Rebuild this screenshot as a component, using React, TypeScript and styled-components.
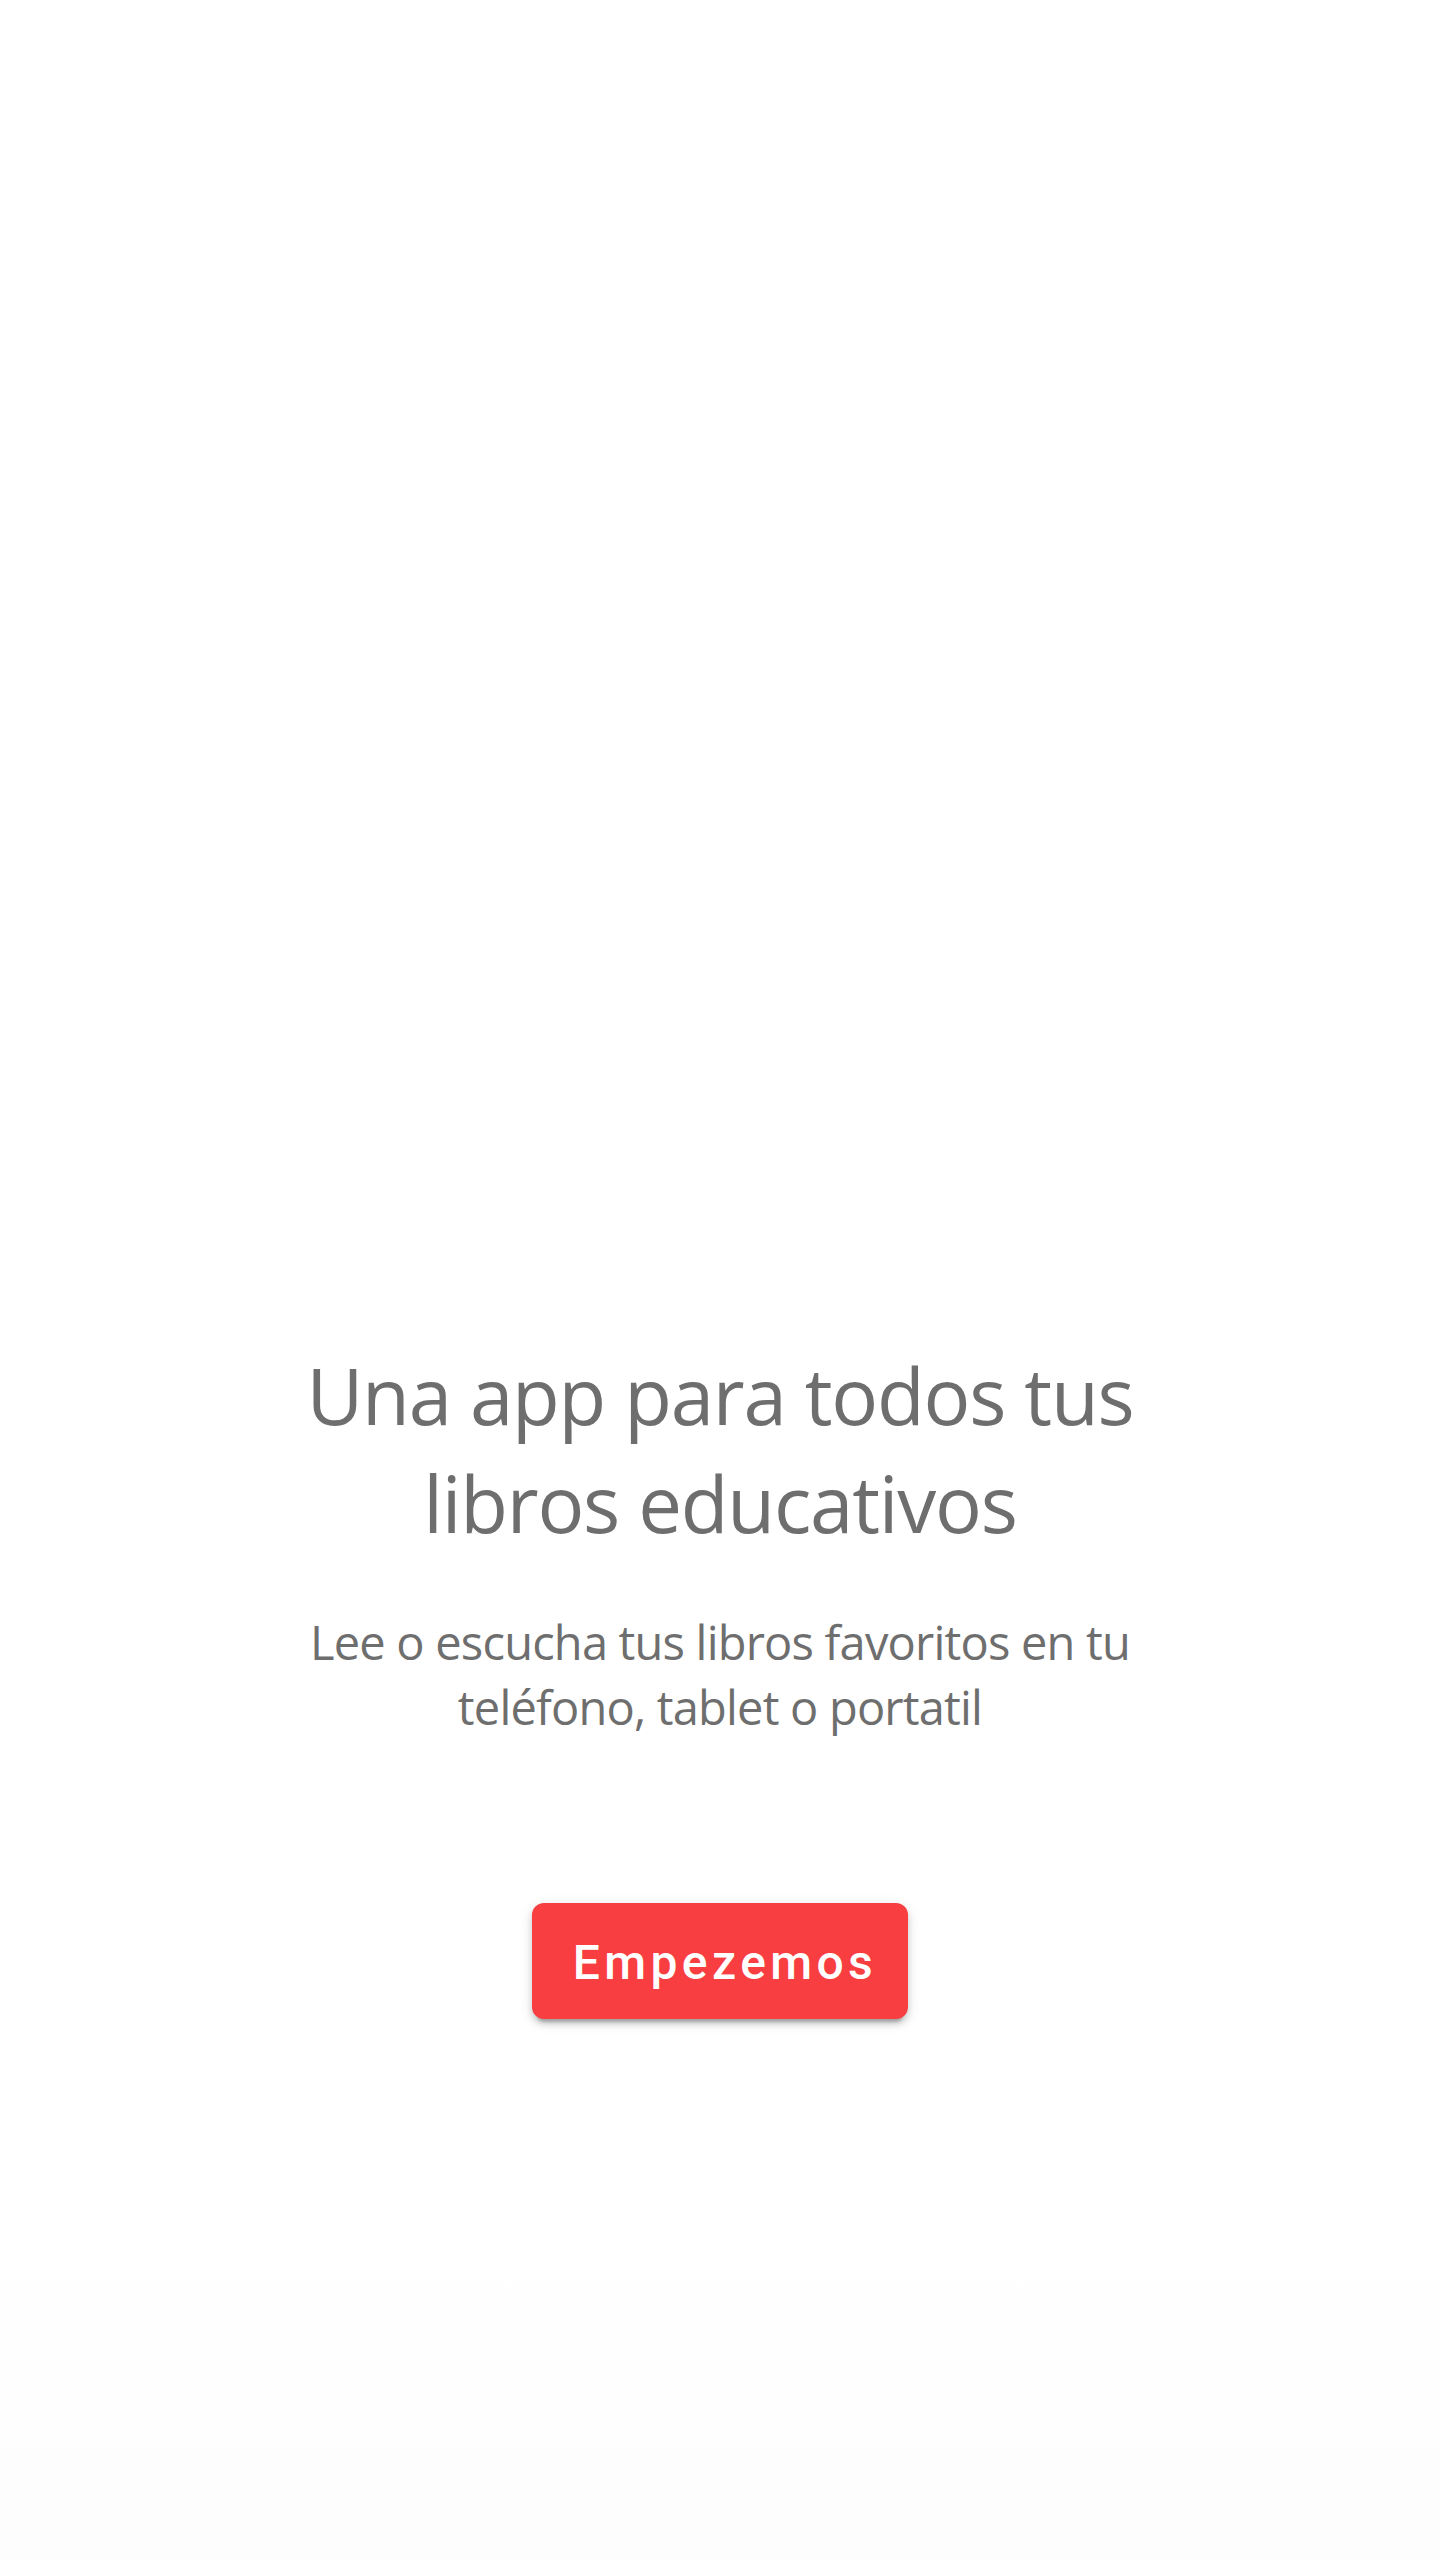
import React from "react";
import styled, { createGlobalStyle } from "styled-components";

const GlobalStyle = createGlobalStyle`
  html, body {
    margin: 0;
    padding: 0;
    background: #ffffff;
  }
  body {
    font-family: "Open Sans", "Noto Sans", "Liberation Sans", sans-serif;
  }
`;

const Page = styled.main`
  min-height: 2560px;
  box-sizing: border-box;
  display: flex;
  flex-direction: column;
  align-items: center;
  padding-top: 1341px;
  background: linear-gradient(#ffffff 0%, #ffffff 85%, #fdfdfd 100%);
`;

const Heading = styled.h1`
  margin: 0;
  font-family: "Open Sans", "Noto Sans", sans-serif;
  font-weight: 400;
  font-size: 78px;
  line-height: 108px;
  letter-spacing: -1.2px;
  color: #6e6e6e;
  text-align: center;
`;

const Subtitle = styled.p`
  margin: 53px 0 0;
  font-family: "Open Sans", "Noto Sans", sans-serif;
  font-weight: 400;
  font-size: 47px;
  line-height: 65px;
  letter-spacing: -0.8px;
  color: #6e6e6e;
  text-align: center;
`;

const StartButton = styled.button`
  margin-top: 163px;
  width: 376px;
  height: 116px;
  box-sizing: border-box;
  padding: 2px 0 0 10px;
  border: none;
  border-radius: 12px;
  background: #f83e41;
  color: #ffffff;
  font-family: Roboto, "Liberation Sans", sans-serif;
  font-weight: 500;
  font-size: 48px;
  letter-spacing: 4.4px;
  cursor: pointer;
  box-shadow: 0 8px 3px -5px rgba(0, 0, 0, 0.2), 0 5px 6px 0 rgba(0, 0, 0, 0.14),
    0 3px 14px 0 rgba(0, 0, 0, 0.12);
`;

export default function App() {
  return (
    <>
      <GlobalStyle />
      <Page>
        <Heading>
          Una app para todos tus
          <br />
          libros educativos
        </Heading>
        <Subtitle>
          Lee o escucha tus libros favoritos en tu
          <br />
          teléfono, tablet o portatil
        </Subtitle>
        <StartButton type="button">Empezemos</StartButton>
      </Page>
    </>
  );
}
